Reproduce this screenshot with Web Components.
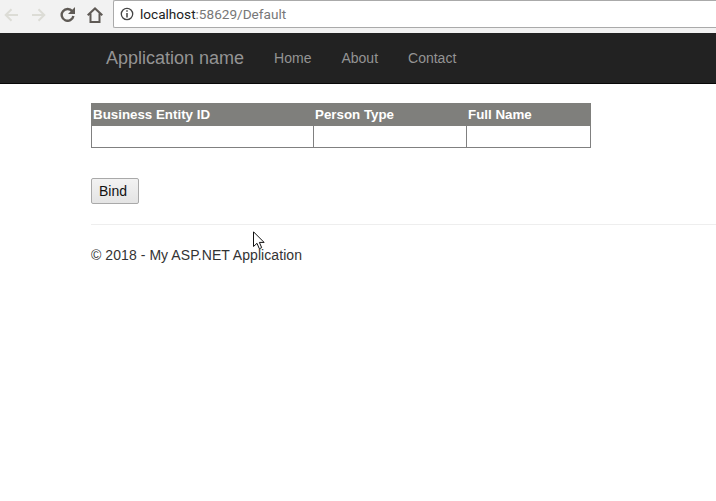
<!DOCTYPE html>
<html>
<head>
<meta charset="utf-8">
<title>Default</title>
<style>
  html, body { margin: 0; height: 100%; background: #fff; }
  body { font-family: "Liberation Sans", Arial, sans-serif; font-size: 14px; color: #333; overflow: hidden; }
</style>
</head>
<body>
<browser-bar url-host="localhost" url-rest=":58629/Default"></browser-bar>
<site-nav brand="Application name">
  <a href="#">Home</a>
  <a href="#">About</a>
  <a href="#">Contact</a>
</site-nav>
<page-body>
  <person-grid></person-grid>
  <bind-button>Bind</bind-button>
  <site-footer>© 2018 - My ASP.NET Application</site-footer>
</page-body>
<mouse-pointer></mouse-pointer>

<script>
(() => {
  class BrowserBar extends HTMLElement {
    constructor() {
      super();
      const root = this.attachShadow({ mode: 'open' });
      root.innerHTML = `
      <style>
        :host {
          display: flex;
          align-items: flex-start;
          box-sizing: border-box;
          height: 33px;
          padding-left: 4px;
          background: #f2f2f2;
          font-family: "Roboto", "Liberation Sans", sans-serif;
        }
        svg { display: block; flex: none; }
        .icons { display: flex; align-items: center; height: 29px; margin-right: 10px; }
        .back { margin-right: 14px; }
        .forward { margin-right: 14px; }
        .reload { margin-right: 12px; }
        .omnibox {
          flex: 1;
          display: flex;
          align-items: center;
          gap: 6px;
          box-sizing: border-box;
          height: 28px;
          padding-left: 6px;
          background: #fff;
          border: 1px solid #aaa;
          border-right: 0;
          border-radius: 2px 0 0 2px;
          font-size: 13.6px;
          color: #222;
        }
        .rest { color: #777; }
      </style>
      <div class="icons">
        <svg class="back" width="14" height="14" viewBox="0 0 14 14" fill="none" stroke="#dcdcd6" stroke-width="2"><path d="M14 7H2M7.500 1.200 1.700 7l5.800 5.800"/></svg>
        <svg class="forward" width="14" height="14" viewBox="0 0 14 14" fill="none" stroke="#dcdcd6" stroke-width="2"><path d="M0 7h12M6.500 1.200 12.300 7l-5.800 5.800"/></svg>
        <svg class="reload" width="15" height="15" viewBox="0 0 15 15" fill="none" stroke="#5f5a55" stroke-width="2.400"><path d="M12.300 4.300A5.900 5.900 0 1 0 13.400 9"/><path d="M15 0v7H8z" fill="#5f5a55" stroke="none"/></svg>
        <svg class="home" width="16" height="16" viewBox="0 0 16 16" fill="none" stroke="#5f5a55" stroke-width="2"><path d="M.7 8.300 8 1.400l7.300 6.900M3.500 6.500V15h9V6.500"/></svg>
      </div>
      <div class="omnibox">
        <svg width="14" height="14" viewBox="0 0 14 14" fill="none" stroke="#444"><circle cx="7" cy="7" r="5.700" stroke-width="1.300"/><path d="M7 6v4.500" stroke-width="1.500"/><path d="M7 3.300v1.500" stroke-width="1.500"/></svg>
        <span><span id="host"></span><span class="rest" id="rest"></span></span>
      </div>`;
      root.getElementById('host').textContent = this.getAttribute('url-host');
      root.getElementById('rest').textContent = this.getAttribute('url-rest');
    }
  }

  class SiteNav extends HTMLElement {
    constructor() {
      super();
      const root = this.attachShadow({ mode: 'open' });
      root.innerHTML = `
      <style>
        :host {
          display: flex;
          align-items: center;
          box-sizing: border-box;
          height: 51px;
          padding-left: 106px;
          background: #222;
          border-bottom: 1px solid #080808;
        }
        .brand { font-size: 18px; color: #949494; margin-right: 30px; }
        nav { display: flex; gap: 30px; }
        ::slotted(a) { color: #949494; font-size: 14px; text-decoration: none; }
      </style>
      <span class="brand"></span>
      <nav><slot></slot></nav>`;
      root.querySelector('.brand').textContent = this.getAttribute('brand');
    }
  }

  class PageBody extends HTMLElement {
    constructor() {
      super();
      this.attachShadow({ mode: 'open' }).innerHTML = `
      <style>
        :host { display: block; padding: 19px 0 0 91px; }
      </style>
      <slot></slot>`;
    }
  }

  class PersonGrid extends HTMLElement {
    constructor() {
      super();
      this.attachShadow({ mode: 'open' }).innerHTML = `
      <style>
        :host { display: block; width: 500px; }
        table { width: 499px; border-collapse: collapse; table-layout: fixed; }
        th {
          height: 21px;
          padding: 0 1px;
          background: #7f7f7c;
          border: 1px solid #7f7f7c;
          color: #fff;
          font-weight: bold;
          font-size: 13.33px;
          text-align: left;
        }
        td { height: 21px; padding: 0; border: 1px solid #808080; }
      </style>
      <table>
        <colgroup><col style="width:222px"><col style="width:153px"><col style="width:124px"></colgroup>
        <tr><th>Business Entity ID</th><th>Person Type</th><th>Full Name</th></tr>
        <tr><td></td><td></td><td></td></tr>
      </table>`;
    }
  }

  class BindButton extends HTMLElement {
    constructor() {
      super();
      this.attachShadow({ mode: 'open' }).innerHTML = `
      <style>
        :host { display: block; margin-top: 30px; }
        button {
          display: block;
          box-sizing: border-box;
          width: 48px;
          height: 26px;
          padding: 0 0 0 7px;
          background: linear-gradient(#f2f2f2, #e4e4e4);
          border: 1px solid #a9a9a9;
          border-radius: 2px;
          font: 14px "Liberation Sans", Arial, sans-serif;
          color: #111;
          text-align: left;
        }
      </style>
      <button type="button"><slot></slot></button>`;
    }
  }

  class SiteFooter extends HTMLElement {
    constructor() {
      super();
      this.attachShadow({ mode: 'open' }).innerHTML = `
      <style>
        :host { display: block; margin-top: 20px; }
        .rule { height: 1px; background: #eee; }
        p { margin: 20px 0 0; line-height: 20px; font-size: 14px; letter-spacing: .065px; color: #333; }
      </style>
      <div class="rule"></div>
      <p><slot></slot></p>`;
    }
  }

  // sits over the page, where the pointer was when the shot was taken
  class MousePointer extends HTMLElement {
    constructor() {
      super();
      this.attachShadow({ mode: 'open' }).innerHTML = `
      <style>
        :host { position: absolute; left: 253px; top: 231px; width: 13px; height: 19px; }
        svg { display: block; }
      </style>
      <svg width="13" height="19" viewBox="0 0 13 19"><path d="M.5.800V15.500L4 12.300l2.300 5.400 2.400-1-2.300-5.300h4.700z" fill="#fff" stroke="#111" stroke-width="1"/></svg>`;
    }
  }

  customElements.define('browser-bar', BrowserBar);
  customElements.define('site-nav', SiteNav);
  customElements.define('page-body', PageBody);
  customElements.define('person-grid', PersonGrid);
  customElements.define('bind-button', BindButton);
  customElements.define('site-footer', SiteFooter);
  customElements.define('mouse-pointer', MousePointer);
})();
</script>
</body>
</html>
